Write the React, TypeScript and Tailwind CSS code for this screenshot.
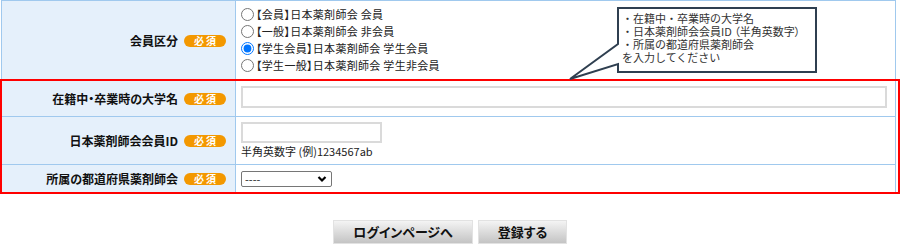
import React from "react";

const Badge = () => (
  <span className="inline-flex items-center justify-center w-[42px] h-[12px] rounded-full bg-[#f39800] text-white text-[10px] leading-none font-bold tracking-[2px] pl-[2px]">
    必須
  </span>
);

const Label = ({ text, h }: { text: string; h: string }) => (
  <div className={`${h} bg-[#e5f0fb] border-r border-b border-[#a0c9ee] flex items-center justify-end gap-[6px] pr-[9px] text-[12px] font-bold text-[#111]`}>
    <span>{text}</span>
    <Badge />
  </div>
);

const options = [
  "【会員】日本薬剤師会 会員",
  "【一般】日本薬剤師会 非会員",
  "【学生会員】日本薬剤師会 学生会員",
  "【学生一般】日本薬剤師会 学生非会員",
];

export default function App() {
  return (
    <div className="relative w-[900px] h-[252px] bg-white font-['Noto_Sans_CJK_JP',sans-serif] [font-feature-settings:'palt'] text-[#222]">
      <div className="pl-[1px]">
        <div className="w-[895px] border-t border-l border-r border-[#a0c9ee] grid grid-cols-[234px_659px]">
          <Label text="会員区分" h="h-[80px]" />
          <div className="h-[80px] border-b border-[#a0c9ee] pl-[5px] pt-[5px] text-[11px]">
            {options.map((o, i) => (
              <label key={o} className="flex items-center h-[17px]">
                <input
                  type="radio"
                  name="kubun"
                  defaultChecked={i === 2}
                  className="m-0 mr-[2px] w-[13px] h-[13px]"
                />
                <span className="tracking-[0.3px]">{o}</span>
              </label>
            ))}
          </div>

          <Label text="在籍中・卒業時の大学名" h="h-[36px]" />
          <div className="h-[36px] border-b border-[#a0c9ee] pl-[5px] pt-[5px]">
            <input type="text" className="block w-[646px] h-[22px] border-2 border-[#dadada] bg-white outline-none" />
          </div>

          <Label text="日本薬剤師会会員ID" h="h-[48px]" />
          <div className="h-[48px] border-b border-[#a0c9ee] pl-[5px] pt-[5px]">
            <input type="text" className="block w-[141px] h-[21px] border-2 border-[#dadada] bg-white outline-none" />
            <div className="text-[11px] leading-[14px] mt-[1px]">半角英数字 (例)1234567ab</div>
          </div>

          <Label text="所属の都道府県薬剤師会" h="h-[28px]" />
          <div className="h-[28px] border-b border-[#a0c9ee] pl-[5px] flex items-center">
            <div className="relative w-[91px] h-[16px] border border-[#767676] rounded-[2px] bg-white overflow-hidden">
              <select className="appearance-none block w-full h-[14px] m-0 p-0 pl-[3px] border-0 bg-transparent text-[11px] leading-[14px] outline-none">
                <option>----</option>
              </select>
              <svg className="absolute right-[4px] top-[3px] pointer-events-none" width="10" height="8" viewBox="0 0 10 8">
                <path d="M1.5 2 L5 5.5 L8.5 2" fill="none" stroke="#000" strokeWidth="2.2" />
              </svg>
            </div>
          </div>
        </div>
      </div>

      <div className="flex justify-center gap-[5px] mt-[27px]">
        <button className="w-[140px] h-[24px] border border-[#e2e2e2] bg-gradient-to-b from-[#f4f4f4] to-[#c4c4c4] text-[13px] font-bold text-[#111]">
          ログインページへ
        </button>
        <button className="w-[89px] h-[24px] border border-[#e2e2e2] bg-gradient-to-b from-[#f4f4f4] to-[#c4c4c4] text-[13px] font-bold text-[#111]">
          登録する
        </button>
      </div>

      {/* red annotation frame */}
      <div className="absolute left-0 top-[79px] w-[900px] h-[115px] border-2 border-[#ff0000] pointer-events-none" />

      {/* callout */}
      <svg className="absolute left-[560px] top-0" width="270" height="85" viewBox="0 0 270 85">
        <path
          d="M58 8 H256 V72 H58 V64 L10 79 L58 44 Z"
          fill="#fff"
          stroke="#2f3f50"
          strokeWidth="2"
          strokeLinejoin="miter"
        />
      </svg>
      <div className="absolute left-[622px] top-[12px] text-[11px] leading-[13px] text-[#333] [font-feature-settings:normal]">
        <div>・在籍中・卒業時の大学名</div>
        <div>・日本薬剤師会会員ID <span className="[font-feature-settings:'palt']">（半角英数字）</span></div>
        <div>・所属の都道府県薬剤師会</div>
        <div>を入力してください</div>
      </div>
    </div>
  );
}
